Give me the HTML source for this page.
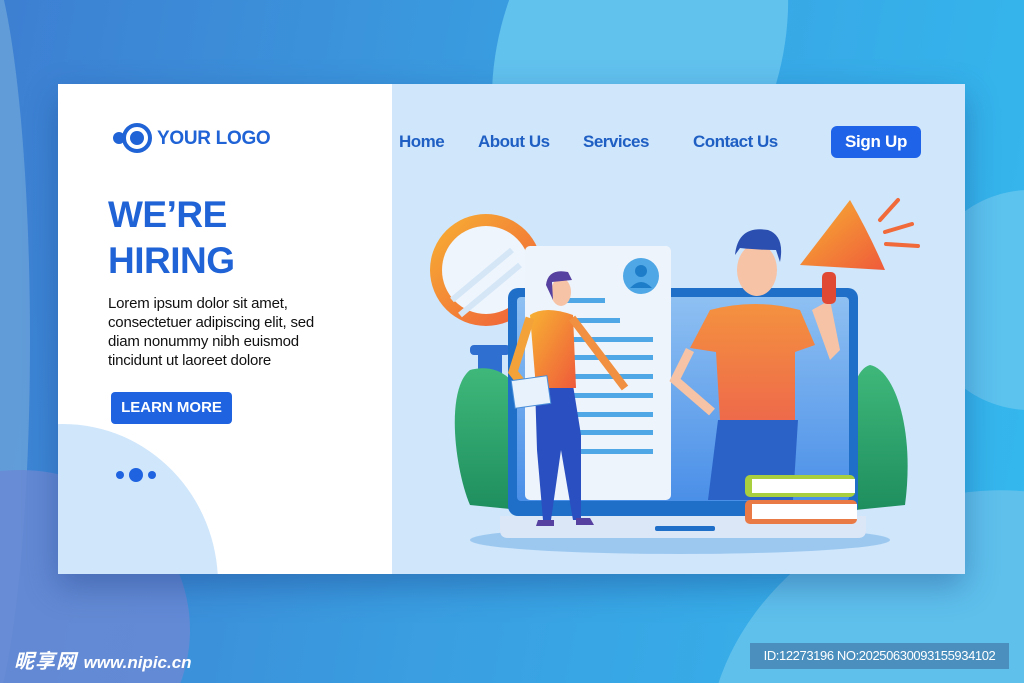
<!DOCTYPE html>
<html><head><meta charset="utf-8"><style>
*{margin:0;padding:0;box-sizing:border-box}
html,body{width:1024px;height:683px;overflow:hidden}
body{position:relative;font-family:"Liberation Sans","Noto Sans CJK SC",sans-serif}
#bg{position:absolute;left:0;top:0;width:1024px;height:683px;overflow:hidden;clip-path:inset(0);contain:paint;background:linear-gradient(100deg,#3d7fd2 0%,#3a9de0 45%,#34b9ee 100%)}
.blob{position:absolute;border-radius:50%}
.card{position:absolute;left:58px;top:84px;width:907px;height:490px;box-shadow:0 12px 30px rgba(20,50,120,.35);overflow:hidden}
.left{position:absolute;left:0;top:0;width:334px;height:490px;background:#fff;overflow:hidden}
.right{position:absolute;left:334px;top:0;width:573px;height:490px;background:#cfe6fb}
.nav{position:absolute;top:48px;font-size:17px;color:#1f5fc4;font-weight:bold;letter-spacing:-0.5px}
</style></head><body>
<div id="bg">
<div class="blob" style="left:-80px;top:-60px;width:110px;height:800px;background:#6aa2da;opacity:.8"></div>
<div class="blob" style="left:500px;top:-160px;width:280px;height:420px;background:#62c2ee;transform:rotate(18deg)"></div>
<div class="blob" style="left:-150px;top:470px;width:340px;height:320px;background:#6a8ad4;opacity:.85"></div>
<div class="blob" style="left:920px;top:190px;width:220px;height:220px;background:#5cc2ee"></div>
<div class="blob" style="left:700px;top:500px;width:520px;height:420px;background:#5fc0ec;transform:rotate(-25deg)"></div>

<div class="card">
 <div class="left">
  <div class="blob" style="left:-150px;top:340px;width:310px;height:320px;background:#cfe6fb"></div>
  <svg style="position:absolute;left:52px;top:38px" width="46" height="32"><circle cx="9" cy="16" r="6" fill="#1f63d6"/><circle cx="27" cy="16" r="13" fill="none" stroke="#1f63d6" stroke-width="4"/><circle cx="27" cy="16" r="7" fill="#1f63d6"/></svg>
  <div style="position:absolute;left:99px;top:44px;font-size:19px;font-weight:bold;color:#1f63d6;letter-spacing:-0.3px">YOUR LOGO</div>
  <div style="position:absolute;left:50px;top:108px;font-size:37px;line-height:46px;font-weight:bold;color:#1f63d6;letter-spacing:-0.5px">WE’RE<br>HIRING</div>
  <div style="position:absolute;left:50px;top:210px;font-size:15px;line-height:19px;color:#111;letter-spacing:-0.2px">Lorem ipsum dolor sit amet,<br>consectetuer adipiscing elit, sed<br>diam nonummy nibh euismod<br>tincidunt ut laoreet dolore</div>
  <div style="position:absolute;left:53px;top:308px;width:121px;height:32px;background:#1f63e0;border-radius:4px;color:#fff;font-weight:bold;font-size:15px;text-align:center;line-height:32px">LEARN MORE</div>
  <svg style="position:absolute;left:56px;top:381px" width="46" height="20"><circle cx="6" cy="10" r="4" fill="#1f63e0"/><circle cx="22" cy="10" r="7" fill="#1f63e0"/><circle cx="38" cy="10" r="4" fill="#1f63e0"/></svg>
 </div>
 <div class="right">
  <div class="nav" style="left:7px">Home</div>
  <div class="nav" style="left:86px">About Us</div>
  <div class="nav" style="left:191px">Services</div>
  <div class="nav" style="left:301px">Contact Us</div>
  <div style="position:absolute;left:439px;top:42px;width:90px;height:32px;background:#1f63e8;border-radius:6px;color:#fff;font-size:17px;font-weight:bold;text-align:center;line-height:32px;letter-spacing:-0.3px">Sign Up</div>
 </div>
 <svg style="position:absolute;left:342px;top:106px" width="565" height="384" viewBox="400 190 565 384">
  <defs>
   <linearGradient id="scr" x1="0" y1="0" x2="0" y2="1"><stop offset="0" stop-color="#8ec0f2"/><stop offset="1" stop-color="#4a8fe8"/></linearGradient>
   <linearGradient id="or" x1="0" y1="0" x2="1" y2="1"><stop offset="0" stop-color="#f7b233"/><stop offset="1" stop-color="#ef5a3a"/></linearGradient>
   <linearGradient id="sh" x1="0" y1="0" x2="0" y2="1"><stop offset="0" stop-color="#f4913f"/><stop offset="1" stop-color="#ee6a4a"/></linearGradient>
   <linearGradient id="gr" x1="0" y1="0" x2="0" y2="1"><stop offset="0" stop-color="#3fb87a"/><stop offset="1" stop-color="#1e8e5e"/></linearGradient>
  </defs>
  <ellipse cx="680" cy="540" rx="210" ry="14" fill="#9cc8f0"/>
  <circle cx="486" cy="270" r="56" fill="url(#or)"/><circle cx="486" cy="270" r="44" fill="#eef5fd"/>
  <path d="M452 300 L512 250 M460 315 L520 265" stroke="#d5e6f7" stroke-width="6"/>
  <rect x="470" y="345" width="40" height="10" rx="4" fill="#2f6fd0"/><rect x="478" y="350" width="24" height="60" fill="#2f6fd0"/>
  <path d="M470 370 C445 390 455 470 470 505 L520 510 L525 400 C510 370 490 365 470 370Z" fill="url(#gr)"/>
  <path d="M870 365 C895 370 915 430 905 505 L855 510 L850 400 C855 380 860 368 870 365Z" fill="url(#gr)"/>
  <rect x="508" y="288" width="350" height="228" rx="10" fill="#1f6fc8"/>
  <rect x="517" y="297" width="332" height="204" rx="4" fill="url(#scr)"/>
  <path d="M500 516 H866 V530 Q866 538 858 538 H508 Q500 538 500 530Z" fill="#dbe6f7"/>
  <rect x="655" y="526" width="60" height="5" rx="2" fill="#1f6fc8"/>
  <rect x="525" y="246" width="146" height="254" rx="5" fill="#eef4fb"/>
  <circle cx="641" cy="276" r="18" fill="#4fa7e6"/><circle cx="641" cy="271" r="6" fill="#1d7dc8"/><path d="M630 288 Q641 276 652 288Z" fill="#1d7dc8"/>
  <g fill="#4fa7e6"><rect x="560" y="298" width="45" height="5"/><rect x="570" y="318" width="50" height="5"/><rect x="570" y="337" width="83" height="5"/><rect x="570" y="355" width="83" height="5"/><rect x="570" y="374" width="83" height="5"/><rect x="570" y="393" width="83" height="5"/><rect x="570" y="412" width="83" height="5"/><rect x="570" y="430" width="83" height="5"/><rect x="570" y="449" width="83" height="5"/></g>
  <path d="M710 310 Q755 298 800 310 L815 345 L795 352 L795 420 H720 L716 352 L690 348Z" fill="url(#sh)"/>
  <path d="M718 420 h80 l-5 80 h-85Z" fill="#2a62c8"/>
  <path d="M690 350 L675 380 L712 412" stroke="#f6c3a6" stroke-width="9" fill="none"/>
  <ellipse cx="757" cy="270" rx="20" ry="26" fill="#f6c3a6"/>
  <path d="M735 255 Q738 225 768 230 Q785 236 780 262 L776 250 Q760 250 740 248Z" fill="#2b4fb0"/>
  <path d="M812 310 L830 300 L840 350 L830 360Z" fill="#f6c3a6"/>
  <path d="M800 265 L850 200 Q870 235 885 270Z" fill="url(#or)"/><rect x="822" y="272" width="14" height="32" rx="5" fill="#e04a35"/>
  <g stroke="#f06a3a" stroke-width="4" stroke-linecap="round"><path d="M880 220 L898 200"/><path d="M885 232 L912 224"/><path d="M886 244 L918 246"/></g>
  <rect x="745" y="475" width="110" height="22" rx="5" fill="#a9cf3e"/><rect x="752" y="479" width="103" height="14" fill="#fff"/>
  <rect x="745" y="500" width="112" height="24" rx="5" fill="#ea7a45"/><rect x="752" y="504" width="105" height="15" fill="#fff"/>
  <path d="M535 385 h38 l8 50 l0 85 h-8 l-12 -70 l-10 70 h-8 l-6 -70Z" fill="#2a4fc0"/>
  <path d="M530 315 Q545 305 573 315 L576 388 H536Z" fill="url(#or)"/>
  <path d="M530 318 L513 372 L527 390" stroke="#f3a23a" stroke-width="9" fill="none"/>
  <path d="M572 318 L625 388" stroke="#f09040" stroke-width="8" fill="none"/>
  <rect x="513" y="378" width="36" height="28" fill="#e8f2fc" stroke="#4a8ed8" transform="rotate(-8 531 392)"/>
  <ellipse cx="561" cy="292" rx="10" ry="14" fill="#f6c3a6"/>
  <path d="M546 285 Q548 268 568 272 L572 280 L552 282 L553 300Z" fill="#5640a0"/>
  <path d="M538 520 h16 v6 h-18Z M576 518 h14 l4 7 h-18Z" fill="#5640a0"/>
 </svg>
</div>

<div style="position:absolute;left:14px;top:645px;font-size:20px;font-weight:bold;font-style:italic;color:#fff;letter-spacing:1px">昵享网 <span style="font-size:17px;letter-spacing:0">www.nipic.cn</span></div>
<div style="position:absolute;left:750px;top:643px;width:259px;height:26px;background:rgba(60,110,160,.6);color:#fff;font-size:13px;line-height:26px;text-align:center;letter-spacing:-0.4px">ID:12273196 NO:20250630093155934102</div>
</div>
</body></html>
